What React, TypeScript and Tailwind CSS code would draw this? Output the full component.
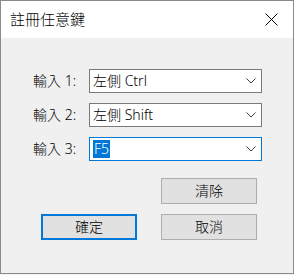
import React from "react";

function Chevron() {
  return (
    <svg width="10" height="6" viewBox="0 0 10 6" className="shrink-0">
      <polyline points="0.5,0.5 5,5 9.5,0.5" fill="none" stroke="#404040" strokeWidth="1" />
    </svg>
  );
}

function Combo({ label, value, focused }: { label: string; value: string; focused?: boolean }) {
  return (
    <div className="flex items-center h-[24px]">
      <div className="w-[56px] text-[14px] leading-none text-black">{label}</div>
      <div
        className={
          "w-[173px] h-[24px] flex items-center justify-between pl-[3px] pr-[5px] bg-white border " +
          (focused ? "border-[#0078d7]" : "border-[#7a7a7a]")
        }
      >
        {focused ? (
          <span className="bg-[#0078d7] text-white text-[14px] leading-[18px] px-[1px]">{value}</span>
        ) : (
          <span className="text-[14px] leading-[18px] text-black">{value}</span>
        )}
        <Chevron />
      </div>
    </div>
  );
}

function Btn({ children, primary }: { children: React.ReactNode; primary?: boolean }) {
  return (
    <button
      className={
        "w-[96px] h-[26px] bg-[#e1e1e1] text-[14px] leading-none text-black flex items-center justify-center " +
        (primary ? "border-2 border-[#0078d7]" : "border border-[#adadad]")
      }
    >
      {children}
    </button>
  );
}

export default function App() {
  return (
    <div
      className="w-[294px] h-[275px] bg-[#f3f3f3] font-light"
      style={{ fontFamily: '"Noto Sans", "Noto Sans CJK TC", sans-serif' }}
    >
      <div className="w-[294px] h-[274px] border border-[#8a8a8a] bg-[#f0f0f0] flex flex-col">
        {/* Title bar */}
        <div className="h-[37px] bg-white flex items-center justify-between pl-[9px] pr-[15px]">
          <span className="text-[15px] text-black leading-none">註冊任意鍵</span>
          <svg width="13" height="13" viewBox="0 0 13 13">
            <path d="M0.5 0.5 L12.5 12.5 M12.5 0.5 L0.5 12.5" stroke="#000" strokeWidth="1" />
          </svg>
        </div>

        {/* Fields */}
        <div className="pl-[32px] pt-[31px] flex flex-col gap-[10px]">
          <Combo label="輸入 1:" value="左側 Ctrl" />
          <Combo label="輸入 2:" value="左側 Shift" />
          <Combo label="輸入 3:" value="F5" focused />
        </div>

        {/* Buttons */}
        <div className="pl-[40px] pt-[17px] grid grid-cols-[96px_96px] gap-x-[24px] gap-y-[10px]">
          <div />
          <Btn>清除</Btn>
          <Btn primary>確定</Btn>
          <Btn>取消</Btn>
        </div>
      </div>
    </div>
  );
}
